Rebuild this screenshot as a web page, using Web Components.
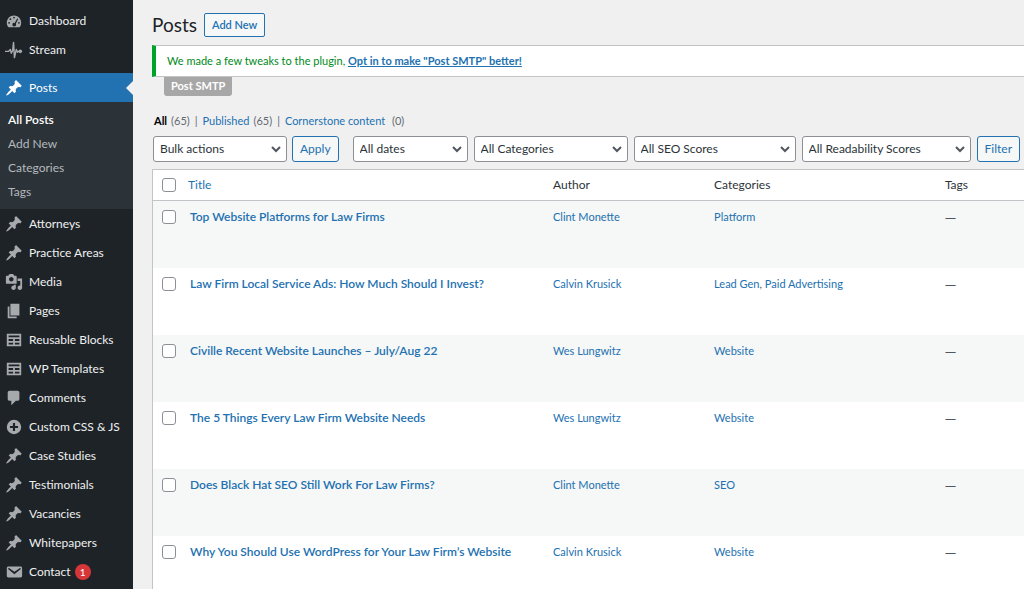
<!DOCTYPE html>
<html lang="en">
<head>
<meta charset="utf-8">
<meta name="viewport" content="width=device-width, initial-scale=1">
<title>Posts</title>
<style>
    html, body {
        margin: 0;
        height: 100%;
        overflow: hidden;
    }

    body {
        background: #f0f0f1;
        color: #3c434a;
        font-family: Lato, "Open Sans", sans-serif;
        font-size: 12px;
        line-height: 16px;
        --link: #2271b1;
        --border: #c3c4c7;
        --control-border: #8c8f94;
    }
</style>
</head>
<body>
<admin-page>
    <admin-menu slot="menu"></admin-menu>
    <page-header>Posts</page-header>
    <admin-notice label="Post SMTP">
        We made a few tweaks to the plugin, <a slot="action" href="#smtp">Opt in to make "Post SMTP" better!</a>
    </admin-notice>
    <view-links></view-links>
    <post-filters></post-filters>
    <posts-table></posts-table>
</admin-page>

<script>
const ICONS = {
    dashboard: '<path fill-rule="evenodd" d="M3.76 17h12.48c1.1-1.37 1.76-3.11 1.76-5 0-4.42-3.58-8-8-8s-8 3.58-8 8c0 1.89.66 3.63 1.76 5zM10 5.2a1 1 0 1 0 0 2 1 1 0 1 0 0-2zM6 7a1 1 0 1 0 0 2 1 1 0 1 0 0-2zM13.6 7.2l-2.8 4.9a2 2 0 1 0 1.2 1l2.7-5.4zM4.5 11a1 1 0 1 0 0 2 1 1 0 1 0 0-2zM15.5 11a1 1 0 1 0 0 2 1 1 0 1 0 0-2z"/>',
    stream: '<path d="M0 11.500h4l2-2 1 4 1.500-3 1-9 1 17 2-9 1.500 3 1-1h2" fill="none" stroke="currentColor" stroke-width="1.600" stroke-linejoin="round"/><circle cx="17" cy="11.500" r="2"/>',
    pin: '<path d="M10.44 3.02l1.82-1.82 6.36 6.35-1.83 1.82c-1.05-.68-2.48-.57-3.41.36l-.75.75c-.92.93-1.04 2.35-.35 3.41l-1.83 1.82-2.41-2.41-2.8 2.79c-.42.42-3.38 2.71-3.8 2.29s1.86-3.39 2.28-3.81l2.79-2.79L4.1 9.36l1.83-1.82c1.05.69 2.48.57 3.4-.36l.75-.75c.93-.92 1.05-2.35.36-3.41z"/>',
    media: '<path fill-rule="evenodd" d="M13 11V4c0-.55-.45-1-1-1h-1.67L9 1H5L3.67 3H2c-.55 0-1 .45-1 1v7c0 .55.45 1 1 1h10c.55 0 1-.45 1-1zM7 4.5c1.38 0 2.5 1.12 2.5 2.5S8.38 9.5 7 9.5 4.5 8.38 4.5 7 5.62 4.5 7 4.5zM14 6h5v10.5c0 1.38-1.12 2.5-2.5 2.5S14 17.88 14 16.5s1.12-2.5 2.5-2.5c.17 0 .34.02.5.05V9h-3V6zm-4 8.05V13h2v3.5c0 1.38-1.12 2.5-2.5 2.5S7 17.88 7 16.5 8.12 14 9.5 14c.17 0 .34.02.5.05z"/>',
    pages: '<path d="M6 15V2h10v13H6zm-1 1h8v2H3V5h2v11z"/>',
    grid: '<path fill-rule="evenodd" d="M18 17V3H2v14h16zM16 7H4V5h12v2zm-7 4H4V9h5v2zm2 0V9h5v2h-5zm-2 4H4v-2h5v2zm2 0v-2h5v2h-5z"/>',
    comments: '<path d="M5 2h9c1.1 0 2 .9 2 2v7c0 1.1-.9 2-2 2h-2l-5 5v-5H5c-1.1 0-2-.9-2-2V4c0-1.1.9-2 2-2z"/>',
    plus: '<path fill-rule="evenodd" d="M10 2a8 8 0 1 0 0 16 8 8 0 1 0 0-16zM8.8 5.5h2.4v3.3h3.3v2.4h-3.3v3.3H8.8v-3.3H5.5V8.8h3.3z"/>',
    mail: '<path d="M3.87 4h13.25C18.37 4 19 4.59 19 5.79v8.42c0 1.19-.63 1.79-1.88 1.79H3.87c-1.25 0-1.88-.6-1.88-1.79V5.79c0-1.2.63-1.79 1.88-1.79zm6.62 8.6l6.74-5.53c.24-.2.43-.66.13-1.07-.29-.41-.82-.42-1.17-.17l-5.7 3.86L4.8 5.83c-.35-.25-.88-.24-1.17.17-.3.41-.11.87.13 1.07z"/>'
};

const MENU = [
    { icon: 'dashboard', text: 'Dashboard' },
    { icon: 'stream', text: 'Stream' },
    { icon: 'pin', text: 'Posts', children: ['All Posts', 'Add New', 'Categories', 'Tags'] },
    { icon: 'pin', text: 'Attorneys' },
    { icon: 'pin', text: 'Practice Areas' },
    { icon: 'media', text: 'Media' },
    { icon: 'pages', text: 'Pages' },
    { icon: 'grid', text: 'Reusable Blocks' },
    { icon: 'grid', text: 'WP Templates' },
    { icon: 'comments', text: 'Comments' },
    { icon: 'plus', text: 'Custom CSS &amp; JS' },
    { icon: 'pin', text: 'Case Studies' },
    { icon: 'pin', text: 'Testimonials' },
    { icon: 'pin', text: 'Vacancies' },
    { icon: 'pin', text: 'Whitepapers' },
    { icon: 'mail', text: 'Contact', count: 1 }
];

const POSTS = [
    { title: 'Top Website Platforms for Law Firms', author: 'Clint Monette', categories: ['Platform'] },
    { title: 'Law Firm Local Service Ads: How Much Should I Invest?', author: 'Calvin Krusick', categories: ['Lead Gen', 'Paid Advertising'] },
    { title: 'Civille Recent Website Launches – July/Aug 22', author: 'Wes Lungwitz', categories: ['Website'] },
    { title: 'The 5 Things Every Law Firm Website Needs', author: 'Wes Lungwitz', categories: ['Website'] },
    { title: 'Does Black Hat SEO Still Work For Law Firms?', author: 'Clint Monette', categories: ['SEO'] },
    { title: 'Why You Should Use WordPress for Your Law Firm’s Website', author: 'Calvin Krusick', categories: ['Website'] }
];

// Attaches an open shadow root and fills it from getStyles() and getTemplate()
class BaseElement extends HTMLElement {
    constructor() {
        super();
        this.attachShadow({ mode: 'open' });
    }

    connectedCallback() {
        this.shadowRoot.innerHTML = `<style>* { box-sizing: border-box; } ${this.getStyles()}</style>${this.getTemplate()}`;
    }
}

class AdminPage extends BaseElement {
    getStyles() {
        return `
            :host { display: flex; height: 100vh; overflow: hidden; }
            main { flex: 1; min-width: 0; padding: 13px 0 0 19px; }
        `;
    }

    getTemplate() {
        return `<slot name="menu"></slot><main><slot></slot></main>`;
    }
}

class AdminMenu extends BaseElement {
    getStyles() {
        return `
            :host { display: block; flex: none; width: 133px; background: #1d2327; }
            ul { list-style: none; margin: 0; padding: 0; }
            nav > ul { padding-top: 6px; }
            a { color: #f0f0f1; text-decoration: none; }
            .item { display: flex; align-items: center; gap: 6px; height: 29px; padding-left: 5px; }
            svg { width: 18px; height: 18px; flex: none; fill: currentColor; color: #a7aaad; }
            .current { margin-top: 9px; }
            .current .item { position: relative; background: var(--link); color: #fff; }
            .current svg { color: #fff; }
            .current .item::after {
                content: "";
                position: absolute;
                right: 0;
                border: 7px solid transparent;
                border-left-width: 0;
                border-right-color: #f0f0f1;
            }
            .submenu { background: #2c3338; padding: 6px 0 5px; }
            .submenu a { display: block; padding: 4px 8px; color: #b4b9be; }
            .submenu a.active { color: #fff; font-weight: 600; }
            .count {
                min-width: 16px;
                margin-left: -2px;
                border-radius: 8px;
                background: #d63638;
                color: #fff;
                font-size: 10px;
                text-align: center;
            }
        `;
    }

    getTemplate() {
        return `<nav aria-label="Main menu"><ul>${MENU.map(item => `
            <li class="${item.children ? 'current' : ''}">
                <a class="item" href="#">
                    <svg viewBox="0 0 20 20" aria-hidden="true">${ICONS[item.icon]}</svg>
                    <span>${item.text}</span>
                    ${item.count ? `<span class="count">${item.count}</span>` : ''}
                </a>
                ${item.children ? `<ul class="submenu">${item.children.map((child, i) =>
                    `<li><a href="#" class="${i === 0 ? 'active' : ''}">${child}</a></li>`).join('')}</ul>` : ''}
            </li>`).join('')}</ul></nav>`;
    }
}

class PageHeader extends BaseElement {
    getStyles() {
        return `
            :host { display: flex; align-items: center; gap: 7px; }
            h1 { margin: 0; font-size: 19px; font-weight: 400; line-height: 24px; color: #1d2327; }
            a {
                padding: 3px 7px;
                border: 1px solid var(--link);
                border-radius: 2px;
                background: #f6f7f7;
                color: var(--link);
                font-size: 11px;
                font-weight: 600;
                text-decoration: none;
            }
        `;
    }

    getTemplate() {
        return `<h1><slot></slot></h1><a href="#new">Add New</a>`;
    }
}

class AdminNotice extends BaseElement {
    getStyles() {
        return `
            :host { display: block; margin-top: 8px; }
            p {
                margin: 0;
                padding: 7px 11px;
                border: 1px solid var(--border);
                border-left: 4px solid #00a32a;
                border-right: 0;
                background: #fff;
                color: #008a20;
                font-size: 11px;
            }
            ::slotted(a) { color: var(--link); font-weight: 700; }
            .label {
                display: inline-block;
                margin-left: 12px;
                padding: 1px 7px 2px;
                border-radius: 0 0 3px 3px;
                background: #a7a7a7;
                color: #fff;
                font-size: 11px;
                font-weight: 700;
                vertical-align: top;
            }
        `;
    }

    getTemplate() {
        return `<p><slot></slot> <slot name="action"></slot></p><span class="label">${this.getAttribute('label')}</span>`;
    }
}

class ViewLinks extends BaseElement {
    getStyles() {
        return `
            :host { display: block; margin: 17px 0 7px 2px; }
            ul { display: flex; gap: 5px; margin: 0; padding: 0; list-style: none; font-size: 11px; color: #646970; }
            li { display: flex; gap: 5px; }
            a { color: var(--link); text-decoration: none; }
            .current { color: #000; font-weight: 700; }
            a + span { margin-left: -1px; }
        `;
    }

    getTemplate() {
        return `<ul>
            <li><a class="current" href="#all">All</a><span>(65)</span><span>|</span></li>
            <li><a href="#published">Published</a><span>(65)</span><span>|</span></li>
            <li><a href="#cornerstone">Cornerstone content</a><span>&nbsp;(0)</span></li>
        </ul>`;
    }
}

class FilterSelect extends BaseElement {
    getStyles() {
        return `
            :host { display: grid; align-items: center; }
            select, svg { grid-area: 1 / 1; }
            select {
                appearance: none;
                width: 100%;
                height: 26px;
                margin: 0;
                padding: 0 22px 0 6px;
                border: 1px solid var(--control-border);
                border-radius: 3px;
                background: #fff;
                color: #2c3338;
                font: inherit;
            }
            svg { justify-self: end; width: 10px; height: 10px; margin-right: 6px; pointer-events: none; }
        `;
    }

    getTemplate() {
        const text = this.getAttribute('text');
        return `
            <select aria-label="${text}"><option>${text}</option></select>
            <svg viewBox="0 0 10 10" fill="none" stroke="#50575e" stroke-width="2" aria-hidden="true"><path d="M1 3l4 4 4-4"/></svg>
        `;
    }
}

class PostFilters extends BaseElement {
    getStyles() {
        return `
            :host { display: flex; gap: 6px; padding-left: 1px; }
            .bulk { display: flex; gap: 5px; margin-right: 8px; }
            button {
                height: 26px;
                padding: 0 7px;
                border: 1px solid var(--link);
                border-radius: 3px;
                background: #f6f7f7;
                color: var(--link);
                font: inherit;
            }
            .w-bulk { width: 134px; }
            .w-dates { width: 115px; }
            .w-categories { width: 154px; }
            .w-seo { width: 162px; }
            .w-readability { width: 169px; }
        `;
    }

    getTemplate() {
        return `
            <div class="bulk">
                <filter-select class="w-bulk" text="Bulk actions"></filter-select>
                <button type="button">Apply</button>
            </div>
            <filter-select class="w-dates" text="All dates"></filter-select>
            <filter-select class="w-categories" text="All Categories"></filter-select>
            <filter-select class="w-seo" text="All SEO Scores"></filter-select>
            <filter-select class="w-readability" text="All Readability Scores"></filter-select>
            <button type="button">Filter</button>
        `;
    }
}

class PostsTable extends BaseElement {
    getStyles() {
        return `
            :host { display: block; margin-top: 7px; border: 1px solid var(--border); border-right: 0; background: #fff; }
            table { width: 100%; table-layout: fixed; border-collapse: collapse; }
            th, td { padding: 8px; text-align: left; vertical-align: top; font-weight: 400; }
            thead th { padding: 7px 8px; border-bottom: 1px solid var(--border); color: #2c3338; }
            thead th:nth-child(2) { padding-left: 6px; }
            tbody tr { height: 67px; }
            tbody tr:nth-child(odd) { background: #f6f7f7; }
            .check { width: 29px; padding-left: 9px; padding-right: 0; }
            .author { width: 18.5%; }
            .categories { width: 26.5%; }
            .tags { width: 10%; }
            tbody .title { font-weight: 600; }
            a { color: var(--link); text-decoration: none; }
            td { font-size: 11px; color: #50575e; }
            .empty { font-family: "Open Sans", sans-serif; }
            input {
                appearance: none;
                display: block;
                width: 14px;
                height: 14px;
                margin: 1px 0;
                border: 1px solid var(--control-border);
                border-radius: 3px;
                background: #fff;
            }
        `;
    }

    getTemplate() {
        return `
            <table>
                <thead>
                    <tr>
                        <th class="check"><input type="checkbox" aria-label="Select all"></th>
                        <th scope="col"><a href="#title">Title</a></th>
                        <th scope="col" class="author">Author</th>
                        <th scope="col" class="categories">Categories</th>
                        <th scope="col" class="tags">Tags</th>
                    </tr>
                </thead>
                <tbody>${POSTS.map(post => `
                    <tr>
                        <td class="check"><input type="checkbox" aria-label="Select ${post.title}"></td>
                        <th scope="row" class="title"><a href="#edit">${post.title}</a></th>
                        <td><a href="#author">${post.author}</a></td>
                        <td>${post.categories.map(name => `<a href="#category">${name}</a>`).join(', ')}</td>
                        <td class="empty">—</td>
                    </tr>`).join('')}
                </tbody>
            </table>
        `;
    }
}

customElements.define('admin-page', AdminPage);
customElements.define('admin-menu', AdminMenu);
customElements.define('page-header', PageHeader);
customElements.define('admin-notice', AdminNotice);
customElements.define('view-links', ViewLinks);
customElements.define('filter-select', FilterSelect);
customElements.define('post-filters', PostFilters);
customElements.define('posts-table', PostsTable);
</script>
</body>
</html>
